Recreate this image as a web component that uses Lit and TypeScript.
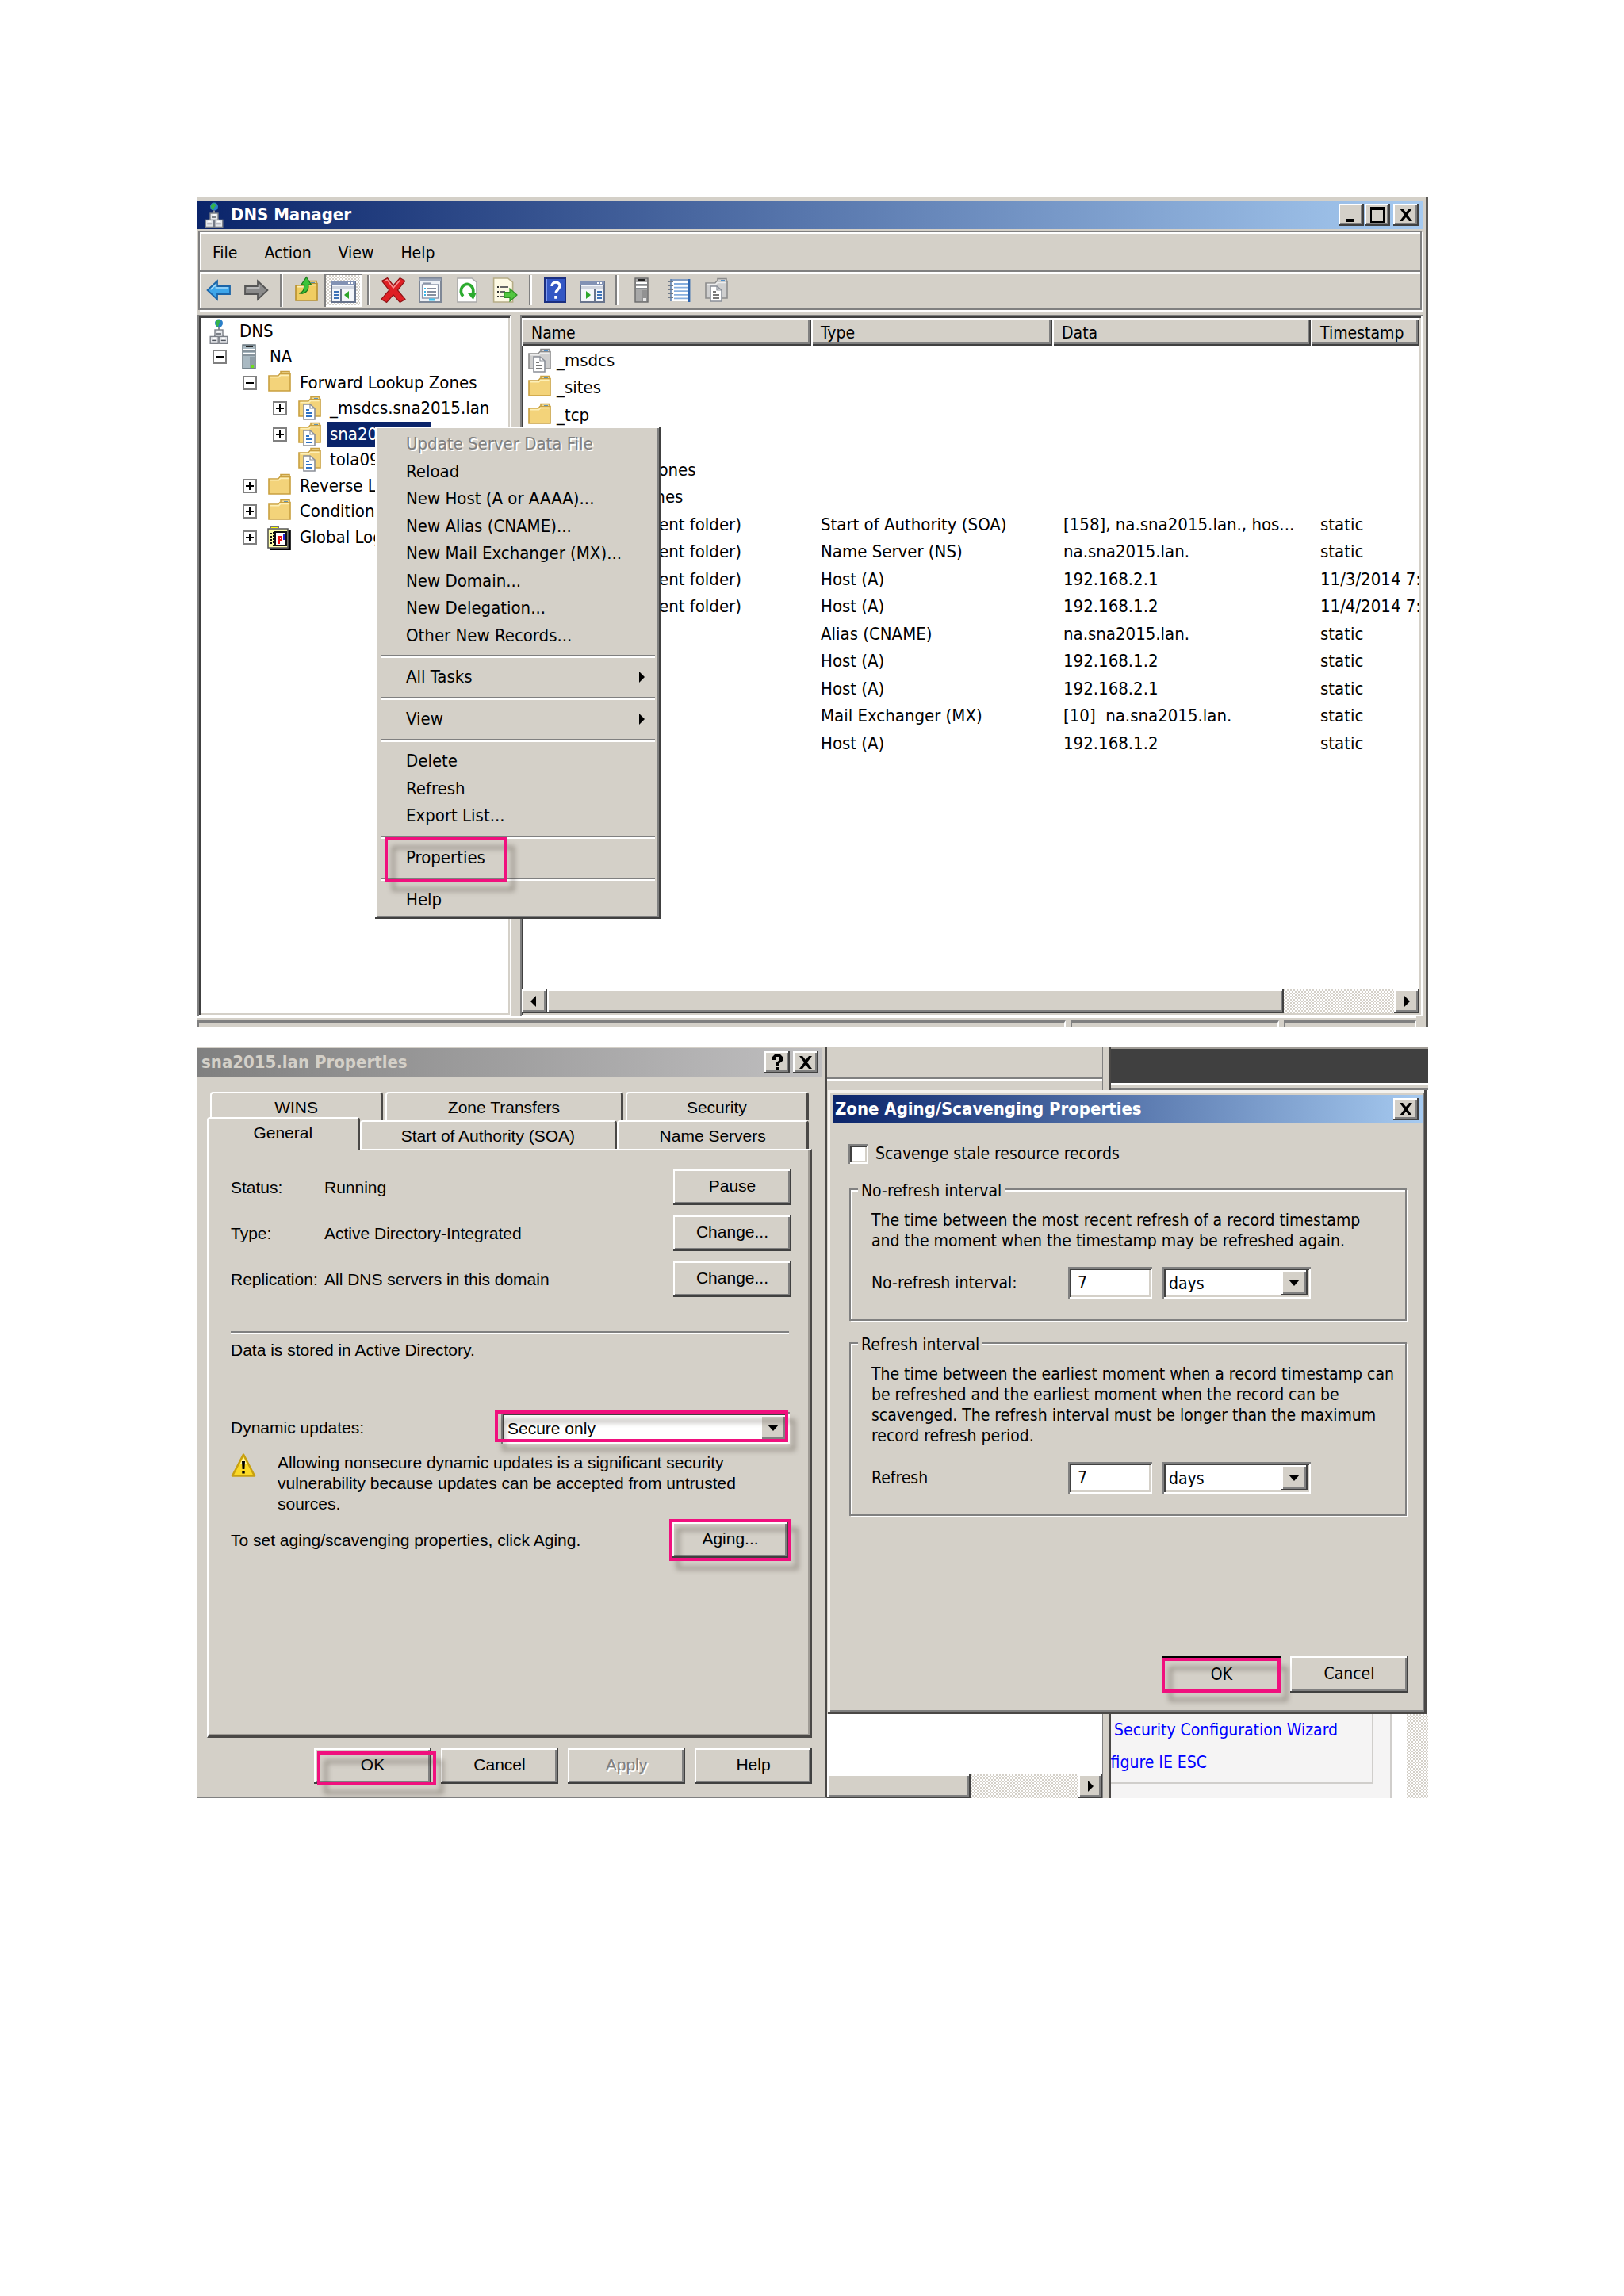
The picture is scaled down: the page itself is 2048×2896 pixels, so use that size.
import { LitElement, html, css, svg, nothing } from "lit";
import { customElement, property } from "lit/decorators.js";
import { classMap } from "lit/directives/class-map.js";

const shared = css`
  * { box-sizing: border-box; }
  button, input, select { font: inherit; color: inherit; margin: 0; border: 0; border-radius: 0; padding: 0; }
  svg { display: block; }
  .face { background: #d4d0c8; }
  .raised { background: #d4d0c8; box-shadow: inset -2px -2px #404040, inset 2px 2px #fff, inset -4px -4px #808080; }
  .sunken { background: #fff; box-shadow: inset 2px 2px #808080, inset -2px -2px #fff, inset 4px 4px #404040, inset -4px -4px #d4d0c8; }
  .dither { background: repeating-conic-gradient(#fff 0 25%, #d4d0c8 0 50%) 0 0 / 4px 4px; }
  .title { display: flex; align-items: center; height: 36px; color: #fff; font: bold 22px/36px "DejaVu Sans Condensed", sans-serif; background: linear-gradient(90deg, #0a246a, #a6caf0); padding: 0 5px; }
  .title.idle { color: #d4d0c8; background: linear-gradient(90deg, #808080, #c0bfc0); }
  .title .text { flex: 1; white-space: nowrap; }
  .cap { width: 32px; height: 28px; display: grid; place-items: center; }
  .cap + .cap { margin-left: 4px; }
  .btn { height: 45px; width: 148px; text-align: center; padding-bottom: 2px; }
  .btn:disabled { color: #808080; text-shadow: 2px 2px #fff; }
  .marked { position: relative; display: grid; }
  .mark { position: absolute; border: 4px solid #f0107e; filter: drop-shadow(9px 11px 3px rgba(60, 50, 40, 0.4)); pointer-events: none; }
  .combo { display: grid; grid-template-columns: 1fr 33px; height: 40px; padding: 4px; }
  .combo select { appearance: none; background: none; grid-area: 1 / 1 / 2 / 3; padding: 2px 0 0 4px; outline: 0; }
  .combo .drop { grid-area: 1 / 2; display: grid; place-items: center; pointer-events: none; }
`;

const glyph = {
  min: svg`<path d="M4 17h11v4H4z"/>`,
  max: svg`<path fill-rule="evenodd" d="M2 2h18v20H2zM4 6v14h14V6z"/>`,
  close: svg`<path d="M3 4h4l4 5 4-5h4l-6 8 6 8h-4l-4-5-4 5H3l6-8z"/>`,
  help: svg`<path d="M5 9V5l3-3h7l3 3v5l-5 4v2H9v-3l5-4V6l-1-1h-3L9 6v3zM9 18h4v4H9z"/>`,
};
const capButton = (label: string, g: unknown) =>
  html`<button class="cap raised" aria-label=${label}><svg width="22" height="24" viewBox="0 0 22 24">${g}</svg></button>`;

const arrow = (dir: "left" | "right" | "down") => {
  const d = { left: "M10 1v14L3 8z", right: "M5 1v14l7-7z", down: "M1 4h14L8 12z" }[dir];
  return html`<svg width="16" height="16" viewBox="0 0 16 16"><path d=${d} /></svg>`;
};

const folder = (light: string, mid: string, edge: string) => svg`
  <path d="M9 .8h5.500v3H9z" fill=${light} stroke=${edge} stroke-width=".8"/><path d="M11 2h2.500" stroke="#3f8fd8"/>
  <path d="M1.500 3.500h6l1-1.200h6.500v10.700h-13.500z" fill=${mid} stroke=${edge} stroke-width=".8"/>
  <path d="M2.300 4.300h5.500l1-1.100h5.500" stroke=${light} stroke-width=".8" fill="none"/>`;
const sheet = (line: string) => svg`
  <path d="M4.500 5.500h4l3 2.500v7h-7z" fill="#fff" stroke="#8a8f98" stroke-width=".8"/><path d="M8.500 5.500v2.500h3" fill="none" stroke="#8a8f98" stroke-width=".6"/>
  <path d="M6 9h2M6 11h4M6 13h4" stroke=${line} stroke-width=".9"/>`;
const rack = (y: number, x: number) => svg`
  <rect x=${x} y=${y} width="5" height="4.500" fill="#e4e6ea" stroke="#7c8088" stroke-width=".7"/>
  <path d="M${x + 1} ${y + 2.5}h3" stroke="#50555e" stroke-width=".7"/><path d="M${x + 1.5} ${y + 1}h2" stroke="#fff" stroke-width=".7"/>`;
const tower = (a: string, b: string, led: string) => svg`
  <rect x="4" y=".5" width="8" height="15" fill=${a} stroke=${b} stroke-width=".7"/>
  <path d="M6 1.500h4.500" stroke="#222"/><path d="M4.500 3.500h7M4.500 6h7" stroke="#fff"/><path d="M4.500 4.500h7M4.500 7h7" stroke="#667078" stroke-width=".6"/>
  <path d="M8.500 8h3v7h-3z" fill=${b} opacity=".35"/><rect x="9" y="13" width="2" height="2" fill=${led}/>`;

const icons: Record<string, unknown> = {
  dns: svg`<circle cx="8" cy="2.800" r="2.500" fill="#2a7fc9"/><path d="M7 .6c2 0 2.600 1.400 1.600 2.200S8 4.500 7.500 5 6 3 5.800 2.500z" fill="#35b34a"/>
    <path d="M8 5.300v2M5 11h6" stroke="#8d9199"/>${rack(7, 5.5)}${rack(11.2, 2.6)}${rack(11.2, 8.4)}`,
  server: tower("#a9b9c2", "#5f6d76", "#6ee01c"),
  serverGrey: tower("#a8a8a8", "#6a6a6a", "#e8e8e8"),
  folder: folder("#fdf0b8", "#f3d37a", "#c9a040"),
  zone: svg`${folder("#fdf0b8", "#f3d37a", "#c9a040")}${sheet("#2f72c4")}`,
  zoneGrey: svg`${folder("#ececec", "#cfcfcf", "#8c8c8c")}${sheet("#777")}`,
  logs: svg`<path d="M2.500 2V1h5v1" fill="#ff0" stroke="#777"/><path d="M14.500 3v12.500H2" stroke="#000" stroke-width="1.800" fill="none"/>
    <path d="M1 2.500h12.500v12H1z" fill="#ffffa8" stroke="#555" stroke-width=".8"/><path d="M3 5v8M4.500 4.500v9" stroke="#111" stroke-dasharray="1 1"/>
    <rect x="5.500" y="4.500" width="7" height="8.500" fill="#fff" stroke="#111"/><path d="M8 12V7.500h1.500v2H8" stroke="#e11" fill="none"/><path d="M11 5.500v4" stroke="#22c"/>`,
  back: svg`<path d="M.8 8 7 2.200v3.300h8v5H7v3.300z" fill="#3ea6ea" stroke="#1c65a8" stroke-width=".9"/><path d="M2.800 7.600 6.200 4.500V6.500H14" stroke="#a9dcfa" fill="none" stroke-width=".8"/>`,
  forward: svg`<path d="M15.200 8 9 2.200v3.300H1v5h8v3.300z" fill="#8b8b8b" stroke="#555" stroke-width=".9"/><path d="M2 6.500h7.800V4.500" stroke="#c9c9c9" fill="none" stroke-width=".8"/>`,
  up: svg`<g transform="translate(0 2.500)">${folder("#fdf0b8", "#f0cd62", "#b8902c")}</g><path d="M3.500 11c3-.5 3.500-3 3.300-5.500H5L8.200.8l3 4.700H9.400C9.800 9 8 11.500 3.500 11z" fill="#3cc43a" stroke="#1d7c1c" stroke-width=".6"/>`,
  paneLeft: svg`<rect x=".5" y="2.500" width="15" height="13" fill="#f4f6fa" stroke="#68748c"/><path d="M.5 3.500h15" stroke="#8292b4" stroke-width="2"/><path d="M11 3.500h1M13 3.500h1" stroke="#fff"/><path d="M1 5.500h14v1.500H1z" fill="#cfd4de"/>
    <path d="M6.500 7.500v8" stroke="#68748c"/><path d="M2 9h3M2 11h3M2 13h3" stroke="#3e73b8"/><path d="M11.500 8.500v5L8.500 11z" fill="#2da62b"/>`,
  paneRight: svg`<rect x=".5" y="2.500" width="15" height="13" fill="#f4f6fa" stroke="#68748c"/><path d="M.5 3.500h15" stroke="#8292b4" stroke-width="2"/><path d="M11 3.500h1M13 3.500h1" stroke="#fff"/><path d="M1 5.500h14v1.500H1z" fill="#cfd4de"/>
    <path d="M9.500 7.500v8" stroke="#68748c"/><path d="M11 9h3M11 11h3M11 13h3" stroke="#3e73b8"/><path d="M4 8.500v5L7 11z" fill="#2da62b"/>`,
  remove: svg`<path d="M.8 2.200 4.300.3 8 5 12.200.3l3.200 1.900L10.700 8l4.800 5.700-3.300 2L8 10.900l-4.200 4.800-3.400-2L5.400 8z" fill="#df1f24" stroke="#8e1215" stroke-width=".6"/><path d="M2.300 2.500 4.100 1.500 8 6.500 12.300 1.700" stroke="#f59393" fill="none" stroke-width=".8"/>`,
  props: svg`<rect x="1" y=".5" width="13.500" height="15" fill="#eef1f6" stroke="#7e8796"/><path d="M1 1.500h13.500" stroke="#9aa5b8" stroke-width="1.500"/><rect x="2.800" y="4.500" width="10" height="8.500" fill="#fff" stroke="#8b95a8" stroke-width=".7"/>
    <path d="M3 3.700h5" stroke="#8b95a8"/><path d="M4 7h1M4 9h1M4 11h1" stroke="#39b4e6"/><path d="M6 7h5.500M6 9h5.500M6 11h5.500" stroke="#5f6b80" stroke-width=".8"/><path d="M7 14h3.500" stroke="#39c1ee" stroke-width="1.500"/>`,
  refresh: svg`<path d="M1.500.5h9l3 2.500v12.500h-12z" fill="#fff" stroke="#a9a9a9" stroke-width=".8"/><path d="M11 10.500A3.900 4.300 0 1 0 5 11.800" fill="none" stroke="#2cab2f" stroke-width="1.900"/><path d="M8 10h5.200l-1.800 4z" fill="#2cab2f"/>`,
  export: svg`<path d="M.8.5h9l3 2.500v12.500h-12z" fill="#fdf9e4" stroke="#b5ac86" stroke-width=".8"/><path d="M3 6h1M3 9h1M3 12h1" stroke="#333"/><path d="M5 6h5M5 9h3M5 12h3" stroke="#666" stroke-width=".9"/><path d="M7.500 9.300h3.500V7l4.500 4-4.500 4v-2.300H7.500z" fill="#52c63f" stroke="#2e8f24" stroke-width=".6"/>`,
  help: svg`<rect x="1.500" y=".5" width="13" height="15" fill="#3357c4" stroke="#1b2f80"/><path d="M2.500 1v14" stroke="#7f9af0"/><path d="M6 5.500C6 2.300 11 2.300 11 5.300 11 7.500 8.500 7.500 8.500 10" fill="none" stroke="#fff" stroke-width="1.700"/><rect x="7.600" y="11.500" width="1.900" height="1.900" fill="#fff"/>`,
  notebook: svg`<path d="M3 1h12v14H3z" fill="#fff"/><path d="M3 1v14M3 1.500h12" stroke="#5c7fae" stroke-width=".8"/><path d="M14.600 1v14.500" stroke="#2f66b0" stroke-width="1.200"/><path d="M5 4h8.500M5 6.300h8.500M5 8.600h8.500M5 10.900h8.500M5 13.200h8.500" stroke="#86aede" stroke-width=".9"/><path d="M1.500 2.500h3M1.500 5h3M1.500 7.500h3M1.500 10h3M1.500 12.500h3" stroke="#707a88"/>`,
};
const icon = (name: string) => html`<svg width="32" height="32" viewBox="0 0 16 16" aria-hidden="true">${icons[name]}</svg>`;

type Node = { depth: number; icon: string; label: string; open?: boolean; selected?: boolean };
const tree: Node[] = [
  { depth: 0, icon: "dns", label: "DNS" },
  { depth: 1, icon: "server", label: "NA", open: true },
  { depth: 2, icon: "folder", label: "Forward Lookup Zones", open: true },
  { depth: 3, icon: "zone", label: "_msdcs.sna2015.lan", open: false },
  { depth: 3, icon: "zone", label: "sna2015.lan", open: false, selected: true },
  { depth: 3, icon: "zone", label: "tola09.lan" },
  { depth: 2, icon: "folder", label: "Reverse Lookup Zones", open: false },
  { depth: 2, icon: "folder", label: "Conditional Forwarders", open: false },
  { depth: 2, icon: "logs", label: "Global Logs", open: false },
];

const same = "(same as parent folder)";
const records: [string, string, string, string, string][] = [
  ["zoneGrey", "_msdcs", "", "", ""],
  ["folder", "_sites", "", "", ""],
  ["folder", "_tcp", "", "", ""],
  ["folder", "_udp", "", "", ""],
  ["folder", "DomainDnsZones", "", "", ""],
  ["folder", "ForestDnsZones", "", "", ""],
  ["", same, "Start of Authority (SOA)", "[158], na.sna2015.lan., hos...", "static"],
  ["", same, "Name Server (NS)", "na.sna2015.lan.", "static"],
  ["", same, "Host (A)", "192.168.2.1", "11/3/2014 7:"],
  ["", same, "Host (A)", "192.168.1.2", "11/4/2014 7:"],
  ["", "", "Alias (CNAME)", "na.sna2015.lan.", "static"],
  ["", "", "Host (A)", "192.168.1.2", "static"],
  ["", "", "Host (A)", "192.168.2.1", "static"],
  ["", "", "Mail Exchanger (MX)", "[10]  na.sna2015.lan.", "static"],
  ["", "", "Host (A)", "192.168.1.2", "static"],
];

const menuGroups: string[][] = [
  ["Update Server Data File", "Reload", "New Host (A or AAAA)...", "New Alias (CNAME)...", "New Mail Exchanger (MX)...", "New Domain...", "New Delegation...", "Other New Records..."],
  ["All Tasks"],
  ["View"],
  ["Delete", "Refresh", "Export List..."],
  ["Properties"],
  ["Help"],
];

const tools: string[][] = [
  ["back", "forward"],
  ["up", "paneLeft"],
  ["remove", "props", "refresh", "export"],
  ["help", "paneRight"],
  ["serverGrey", "notebook", "zoneGrey"],
];

@customElement("dns-window")
export class DnsWindow extends LitElement {
  static styles = [shared, css`
    :host { display: block; position: relative; font: 22px/26px "DejaVu Sans Condensed", sans-serif; color: #000; }
    .win { padding: 4px 4px 0 1px; border-right: 3px solid #5c5a57; }
    .title { gap: 5px; }
    .caps { display: flex; }
    .caps .cap + .cap { margin-left: 1px; }
    .caps .cap:last-child { margin-left: 4px; }
    .bars { margin: 2px 1px 6px; border: 2px solid #808080; box-shadow: 2px 2px #fff, inset 2px 2px #fff; }
    .menubar { height: 48px; display: flex; align-items: center; gap: 34px; padding: 3px 16px 0; font-size: 21px; }
    .menubar button { background: none; }
    .toolbar { height: 48px; border-top: 2px solid #808080; box-shadow: inset 2px 2px #fff; display: flex; align-items: center; }
    .group { display: flex; }
    .group + .group { border-left: 2px solid #808080; box-shadow: inset 2px 0 #fff; margin-left: 7px; padding-left: 7px; }
    .group:last-child { margin-left: 6px; }
    .tool { width: 47px; height: 38px; display: grid; place-items: center; background: none; }
    .tool.on { height: 42px; background: repeating-conic-gradient(#fff 0 25%, #d4d0c8 0 50%) 0 0 / 4px 4px; box-shadow: inset 2px 2px #808080, inset -2px -2px #fff; }
    .panes { display: flex; gap: 11px; min-height: 885px; }
    .tree { width: 396px; padding: 4px; margin: 0; list-style: none; overflow: hidden; flex: none; }
    .node { display: flex; align-items: center; height: 33px; padding-left: 7px; white-space: nowrap; }
    .node:nth-child(even) { height: 32px; }
    .d2 { padding-left: 45px; }
    .d3 { padding-left: 83px; }
    .slot { width: 38px; padding-left: 8px; flex: none; }
    .node svg { flex: none; }
    .box { width: 18px; height: 18px; border: 2px solid #808080; background: #fff; display: grid; place-items: center; }
    .label { margin-left: 7px; padding: 0 3px 4px; height: 32px; line-height: 32px; }
    .label.sel { background: #0a246a; color: #fff; padding-right: 5px; }
    .list { flex: 1; min-width: 0; padding: 4px 4px 4px 2px; display: flex; flex-direction: column; justify-content: space-between; }
    .view { overflow: hidden; }
    table { table-layout: fixed; width: 100%; border-collapse: collapse; }
    .c1 { width: 365px; } .c2 { width: 304px; } .c3 { width: 326px; }
    th { font-weight: normal; font-size: 21px; text-align: left; height: 36px; padding: 2px 0 0 12px; background: #d4d0c8; box-shadow: inset 2px 2px #fff, inset -2px -3px #404040, inset -4px -5px #808080; }
    td { height: 35px; padding: 0 0 0 12px; white-space: pre; overflow: hidden; }
    td:nth-child(3) { padding-left: 14px; }
    tr:nth-child(even) td { height: 34px; }
    .name { display: flex; align-items: center; gap: 6px; margin-left: -6px; height: 32px; }
    .noicon { width: 32px; }
    .scroll { display: flex; height: 30px; }
    .scroll .end { width: 32px; display: grid; place-items: center; }
    .thumb { flex: 927; }
    .track { flex: 139; }
    .status { display: grid; grid-template-columns: 1096fr 264fr 167fr; gap: 6px; margin: 0 8px 0 0; padding-top: 5px; box-shadow: inset 0 2px #fff; }
    .status div { height: 8px; border-top: 3px solid #808080; border-left: 2px solid #808080; border-right: 2px solid #fff; }
    .menu { position: absolute; left: 225px; top: 289px; width: 360px; padding: 5px 6px 6px; }
    .item { display: flex; justify-content: space-between; align-items: center; width: 100%; height: 35px; padding: 0 10px 1px 33px; background: none; text-align: left; white-space: nowrap; }
    .item:nth-child(even) { height: 34px; }
    .item:disabled { color: #808080; text-shadow: 2px 2px #fff; }
    .rule { height: 4px; margin: 7px 1px; border-top: 2px solid #808080; border-bottom: 2px solid #fff; }
    .menu .mark { inset: -9px 187px -13px 6px; }
  `];

  render() {
    return html`
      <div class="win face">
        <div class="title">${icon("dns")}<span class="text">DNS Manager</span>
          <span class="caps">${capButton("Minimize", glyph.min)}${capButton("Maximize", glyph.max)}${capButton("Close", glyph.close)}</span>
        </div>
        <div class="bars">
          <nav class="menubar">${["File", "Action", "View", "Help"].map((m) => html`<button>${m}</button>`)}</nav>
          <div class="toolbar">${tools.map((g) => html`<div class="group">${g.map((t) => html`
            <button aria-label=${t} class=${classMap({ tool: true, on: t === "paneLeft" })}>${icon(t)}</button>`)}</div>`)}</div>
        </div>
        <div class="panes">
          <ul class="tree sunken">${tree.map((n) => html`
            <li class="node d${n.depth}">
              ${n.depth ? html`<span class="slot">${n.open === undefined ? nothing : html`<span class="box">
                <svg width="12" height="12" viewBox="0 0 12 12"><path d=${n.open ? "M1 6h10" : "M1 6h10M6 1v10"} stroke="#000" stroke-width="2"/></svg></span>`}</span>` : nothing}
              ${icon(n.icon)}<span class=${classMap({ label: true, sel: !!n.selected })}>${n.label}</span>
            </li>`)}</ul>
          <div class="list sunken">
            <div class="view"><table>
              <colgroup><col class="c1"><col class="c2"><col class="c3"><col></colgroup>
              <thead><tr><th>Name</th><th>Type</th><th>Data</th><th>Timestamp</th></tr></thead>
              <tbody>${records.map(([i, name, type, data, stamp]) => html`
                <tr><td><div class="name">${i ? icon(i) : html`<span class="noicon"></span>`}<span>${name}</span></div></td><td>${type}</td><td>${data}</td><td>${stamp}</td></tr>`)}</tbody>
            </table></div>
            <div class="scroll"><button class="end raised" aria-label="Scroll left">${arrow("left")}</button><div class="thumb raised"></div><div class="track dither"></div><button class="end raised" aria-label="Scroll right">${arrow("right")}</button></div>
          </div>
        </div>
        <div class="status"><div></div><div></div><div></div></div>
      </div>
      <div class="menu raised" role="menu">
        ${menuGroups.map((g, i) => html`${i ? html`<div class="rule"></div>` : nothing}
          <div class=${classMap({ marked: g[0] === "Properties" })}>${g.map((t) => html`
            <button class="item" role="menuitem" ?disabled=${t.startsWith("Update")}><span>${t}</span>${t === "All Tasks" || t === "View" ? arrow("right") : nothing}</button>`)}
            ${g[0] === "Properties" ? html`<span class="mark"></span>` : nothing}</div>`)}
      </div>`;
  }
}

@customElement("zone-properties")
export class ZoneProperties extends LitElement {
  static styles = [shared, css`
    :host { display: flex; flex-direction: column; background: #d4d0c8; border-right: 3px solid #4a4846; border-bottom: 2px solid #808080; padding-top: 2px; font: 21px/26px "Liberation Sans", sans-serif; }
    .title { margin: 0 3px 0 1px; }
    .tabs { display: grid; margin: 19px 20px 0 13px; }
    .tabs.top { grid-template-columns: 218fr 299fr 231fr; gap: 3px; padding-left: 4px; }
    .tabs.low { grid-template-columns: 192fr 324fr 241fr; margin-top: 0; }
    .tab { height: 36px; background: #d4d0c8; border: solid; border-width: 2px 3px 0 2px; border-color: #fff #4a4846 #fff #fff; border-radius: 4px 4px 0 0; padding-top: 2px; }
    .tab.front { height: 41px; margin: -4px 0 -2px; z-index: 1; padding: 0 0 4px; }
    .panel { margin: 0 16px 0 13px; min-height: 743px; border: solid; border-width: 2px 3px 3px 2px; border-color: #fff #4a4846 #4a4846 #fff; box-shadow: inset -2px -2px #a09c96; padding: 24px 23px 0 28px; }
    .facts { display: grid; grid-template-columns: 118px 1fr 149px; row-gap: 13px; align-items: center; margin: 0; }
    dt, dd { margin: 0; white-space: nowrap; }
    .btn { width: 100%; padding-bottom: 4px; }
    .rule { height: 4px; border-top: 2px solid #808080; border-bottom: 2px solid #fff; margin: 43px 3px 7px 0; }
    p { margin: 0; }
    .row { display: grid; align-items: center; }
    .updates { grid-template-columns: 1fr 364px; margin: 65px 2px 11px 0; }
    .updates .mark { inset: -2px 2px 2px -8px; }
    .note { display: grid; grid-template-columns: 59px 1fr; padding-right: 30px; }
    .aging { grid-template-columns: 1fr 146px; margin: 10px 4px 0 0; }
    .aging .mark { inset: -4px; }
    .foot { display: flex; justify-content: flex-end; gap: 12px; padding: 13px 16px 16px; }
    .foot .btn, .foot .marked { width: 148px; }
    .foot .mark { inset: 4px -6px -2px 4px; }
  `];

  render() {
    return html`
      <div class="title idle"><span class="text">sna2015.lan Properties</span>${capButton("Help", glyph.help)}${capButton("Close", glyph.close)}</div>
      <div class="tabs top" role="tablist">${["WINS", "Zone Transfers", "Security"].map((t) => html`<button class="tab" role="tab">${t}</button>`)}</div>
      <div class="tabs low" role="tablist">${["General", "Start of Authority (SOA)", "Name Servers"].map((t, i) => html`<button class=${classMap({ tab: true, front: i === 0 })} role="tab">${t}</button>`)}</div>
      <div class="panel">
        <dl class="facts">
          <dt>Status:</dt><dd>Running</dd><button class="btn raised">Pause</button>
          <dt>Type:</dt><dd>Active Directory-Integrated</dd><button class="btn raised">Change...</button>
          <dt>Replication:</dt><dd>All DNS servers in this domain</dd><button class="btn raised">Change...</button>
        </dl>
        <div class="rule"></div>
        <p>Data is stored in Active Directory.</p>
        <div class="row updates"><label for="updates">Dynamic updates:</label>
          <div class="marked"><div class="combo sunken"><select id="updates"><option>Secure only</option></select><span class="drop raised">${arrow("down")}</span></div><span class="mark"></span></div>
        </div>
        <div class="note">
          <svg width="32" height="32" viewBox="0 0 32 32" aria-hidden="true"><path d="M16 2.500 30 29.500H2z" fill="#fbd926" stroke="#c8a010" stroke-width="2.500" stroke-linejoin="round"/><path d="M16 6 20 14H12z" fill="#fff6a8"/><path d="M14 11h4l-.6 10h-2.800zM14.300 23h3.400v3.500h-3.400z"/></svg>
          <p>Allowing nonsecure dynamic updates is a significant security vulnerability because updates can be accepted from untrusted sources.</p>
        </div>
        <div class="row aging"><span>To set aging/scavenging properties, click Aging.</span><div class="marked"><button class="btn raised">Aging...</button><span class="mark"></span></div></div>
      </div>
      <div class="foot">
        <div class="marked"><button class="btn raised">OK</button><span class="mark"></span></div>
        <button class="btn raised">Cancel</button><button class="btn raised" disabled>Apply</button><button class="btn raised">Help</button>
      </div>`;
  }
}

@customElement("interval-group")
export class IntervalGroup extends LitElement {
  @property() heading = "";
  @property() text = "";
  @property() label = "";
  static styles = [shared, css`
    :host { display: block; }
    fieldset { margin: 0; padding: 0; min-width: 0; border: 2px solid #808080; box-shadow: 2px 2px #fff, inset 2px 2px #fff; }
    legend { margin-left: 9px; padding: 2px 4px 0; height: 26px; background: #d4d0c8; }
    .body { padding: 13px 2px 26px 26px; }
    p { margin: 0 0 20px; white-space: pre-line; }
    .row { display: flex; align-items: center; gap: 13px; }
    label { width: 235px; }
    input { width: 106px; height: 40px; padding: 0 12px; outline: 0; }
    .combo { width: 187px; }
  `];
  render() {
    return html`<fieldset><legend>${this.heading}</legend><div class="body"><p>${this.text}</p>
      <div class="row"><label for="n">${this.label}</label><input id="n" class="sunken" value="7">
      <div class="combo sunken"><select aria-label="Unit"><option>days</option></select><span class="drop raised">${arrow("down")}</span></div></div></div></fieldset>`;
  }
}

const noRefreshText = "The time between the most recent refresh of a record timestamp\nand the moment when the timestamp may be refreshed again.";
const refreshText = "The time between the earliest moment when a record timestamp can be refreshed and the earliest moment when the record can be scavenged. The refresh interval must be longer than the maximum record refresh period.";

@customElement("aging-dialog")
export class AgingDialog extends LitElement {
  static styles = [shared, css`
    :host { display: flex; flex-direction: column; min-height: 787px; padding: 6px 5px 6px 6px; background: #d4d0c8; font: 21px/26px "DejaVu Sans Condensed", sans-serif; box-shadow: inset -3px -3px #4a4846, inset 3px 3px #f4f2ee, inset -5px -5px #808080; }
    .title { padding-left: 3px; }
    .check { display: flex; align-items: center; gap: 9px; margin: 25px 22px 19px 20px; height: 26px; }
    .check input { appearance: none; width: 25px; height: 25px; }
    interval-group { margin: 0 20px 15px 21px; }
    .foot { margin-top: auto; display: flex; justify-content: flex-end; gap: 12px; padding: 0 18px 21px; }
    .foot .btn { height: 46px; width: 149px; }
    .ok .btn { border-top: 2px solid #000; }
    .ok .mark { inset: 2px 0 0 -1px; }
  `];
  render() {
    return html`
      <div class="title"><span class="text">Zone Aging/Scavenging Properties</span>${capButton("Close", glyph.close)}</div>
      <label class="check"><input type="checkbox" class="sunken">Scavenge stale resource records</label>
      <interval-group heading="No-refresh interval" label="No-refresh interval:" .text=${noRefreshText}></interval-group>
      <interval-group heading="Refresh interval" label="Refresh" .text=${refreshText}></interval-group>
      <div class="foot"><div class="marked ok"><button class="btn raised">OK</button><span class="mark"></span></div><button class="btn raised">Cancel</button></div>`;
  }
}

@customElement("app-root")
export class AppRoot extends LitElement {
  static styles = [shared, css`
    :host { display: block; background: #fff; padding: 249px 247px 249px 248px; }
    .scene { display: flex; margin-top: 25px; }
    zone-properties { flex: 793 1 0; min-width: 0; }
    .desk { flex: 759 1 0; min-width: 0; position: relative; display: flex; }
    aging-dialog { position: absolute; top: 55px; left: 1px; right: 2px; }
    .behind { flex: 1; display: flex; flex-direction: column; background: #d4d0c8; }
    .behind .strip { height: 41px; border-bottom: 2px solid #808080; box-shadow: 0 2px #fff; }
    .behind .blank { flex: 1; }
    .behind .rows { height: 106px; background: #fff; display: flex; align-items: flex-end; }
    .thumb { flex: 181; height: 30px; }
    .track { flex: 136; height: 30px; }
    .end { width: 30px; height: 30px; display: grid; place-items: center; }
    .split { width: 11px; background: #d4d0c8; border-right: 3px solid #4a4846; border-left: 1px solid #808080; }
    .side { width: 400px; display: flex; flex-direction: column; }
    .dark { height: 46px; background: #404040; border-top: 3px solid #a09c96; }
    .edge { height: 9px; background: #d4d0c8; border-top: 2px solid #fff; border-bottom: 3px solid #808080; }
    .fill { flex: 1; }
    .server { height: 106px; display: grid; grid-template-columns: 354px 19px 1fr; }
    .card { background: #f5f4f4; border-right: 2px solid #d0cecb; padding: 0 21px 18px 0; display: grid; }
    .links { border: solid #d0cecb; border-width: 0 2px 2px 0; font: 21px/41px "DejaVu Sans Condensed", sans-serif; padding-left: 4px; }
    a { color: #00f; text-decoration: none; display: block; white-space: nowrap; }
    .cut { display: flex; justify-content: flex-end; width: 121px; margin-left: -4px; overflow: hidden; }
  `];
  render() {
    return html`
      <dns-window></dns-window>
      <div class="scene">
        <zone-properties></zone-properties>
        <div class="desk">
          <div class="behind"><div class="strip"></div><div class="blank"></div>
            <div class="rows"><div class="thumb raised"></div><div class="track dither"></div><button class="end raised" aria-label="Scroll right">${arrow("right")}</button></div></div>
          <div class="split"></div>
          <div class="side"><div class="dark"></div><div class="edge"></div><div class="fill"></div>
            <div class="server"><div class="card"><div class="links"><a href="#wizard">Security Configuration Wizard</a><a class="cut" href="#esc">Configure IE ESC</a></div></div><div></div><div class="dither"></div></div></div>
          <aging-dialog></aging-dialog>
        </div>
      </div>`;
  }
}
